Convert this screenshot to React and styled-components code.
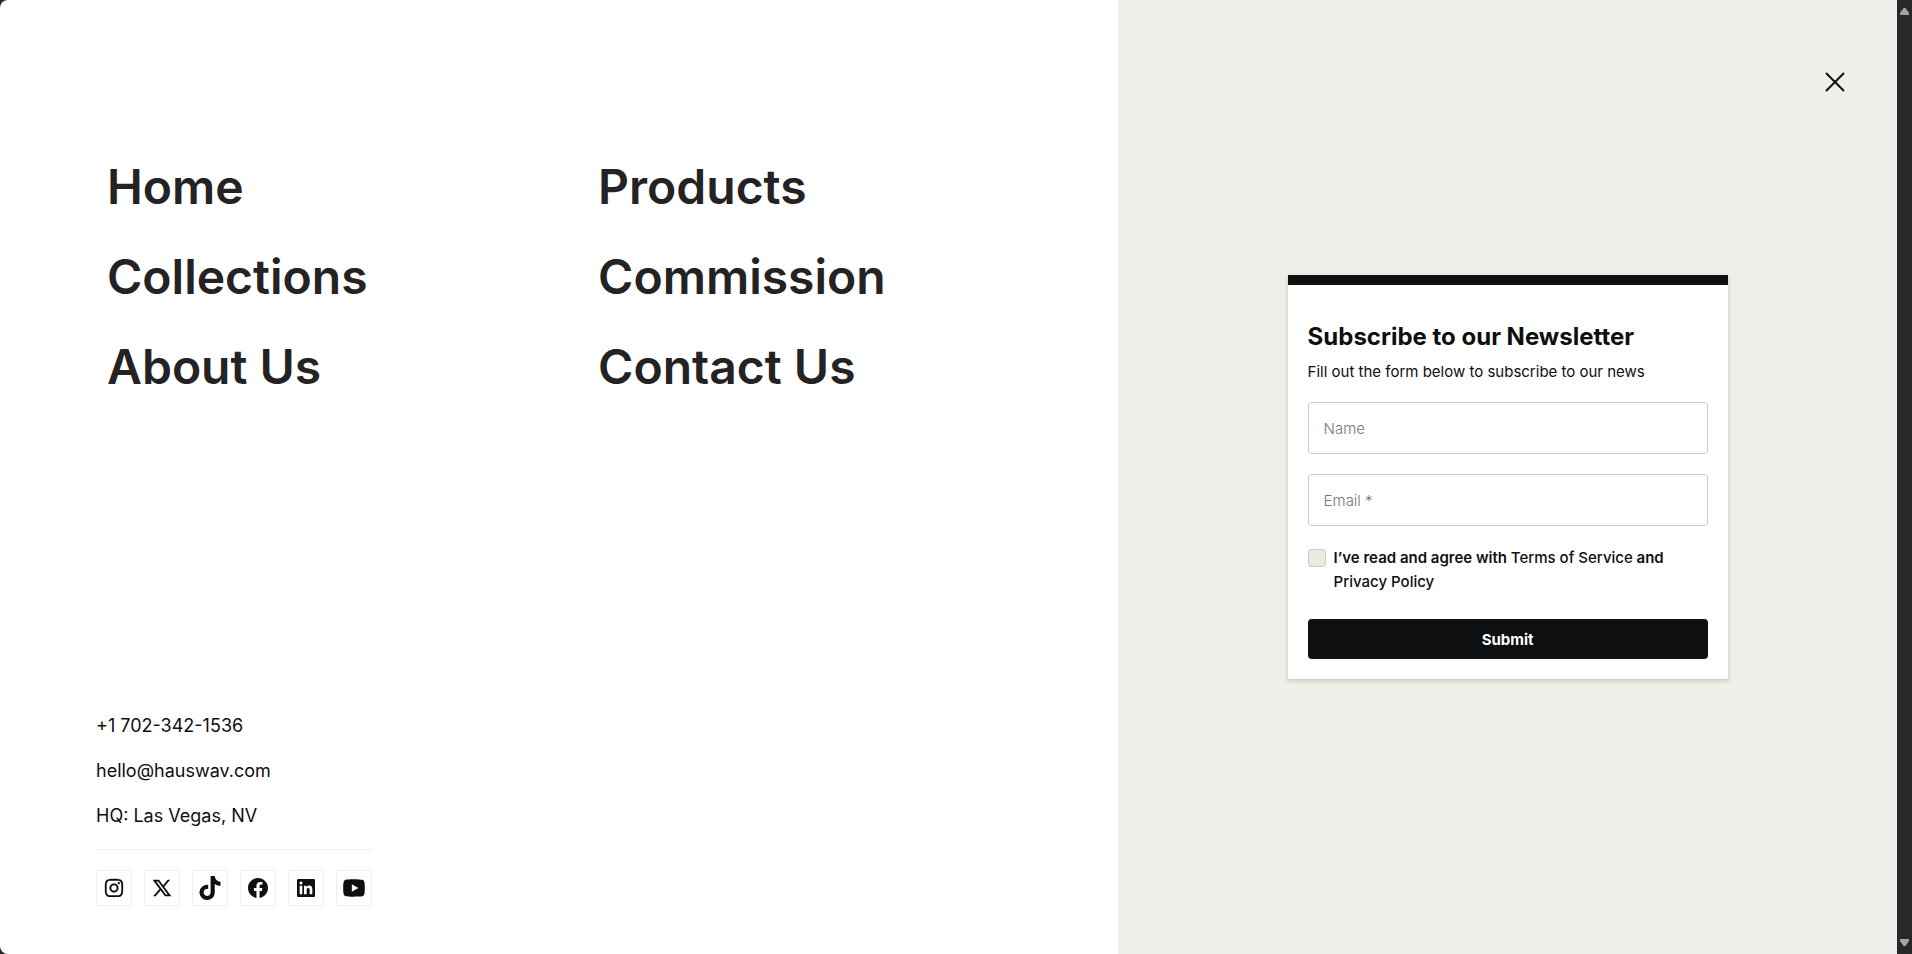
import { useState } from 'react';

import styled, { createGlobalStyle } from 'styled-components';
import {
  RiFacebookCircleFill,
  RiInstagramLine,
  RiLinkedinBoxFill,
  RiTwitterXLine,
  RiYoutubeFill,
} from 'react-icons/ri';
import { FaTiktok } from 'react-icons/fa6';

const GlobalStyle = createGlobalStyle`
  *, *::before, *::after {
    box-sizing: border-box;
  }

  body {
    margin: 0;
    background: #292728;
    color: #0e0f10;
    font-family: Inter, "Liberation Sans", sans-serif;
  }

  a {
    color: inherit;
    text-decoration: none;
  }

  h2, p, ul {
    margin: 0;
    padding: 0;
    list-style: none;
  }
`;

const StyledWindow = styled.div`
  display: flex;
  min-height: 100vh;
`;

const StyledMenu = styled.div`
  flex: 1;
  display: grid;
  grid-template-columns: 56fr 39fr;
  border-radius: 8px 0 0 8px;
  overflow: hidden;

  @media screen and (max-width: 992px) {
    grid-template-columns: 1fr;
  }
`;

const StyledLeft = styled.main`
  display: flex;
  flex-direction: column;
  justify-content: space-between;
  gap: 64px;
  padding: 158px 40px 48px 96px;
  background: #ffffff;
`;

const StyledNav = styled.nav`
  display: grid;
  grid-template-columns: 1fr 1fr;
  row-gap: 32px;
`;

const StyledNavLink = styled.a`
  padding-left: 11px;
  color: #242223;
  font-size: 48px;
  font-weight: 600;
  line-height: 58px;
`;

const StyledContact = styled.footer`
  align-self: flex-start;
`;

const StyledContactList = styled.ul`
  display: grid;
  row-gap: 18px;
  padding-bottom: 20px;
  border-bottom: 1px solid #efeeea;
  font-size: 18px;
  line-height: 27px;
`;

const StyledSocials = styled.ul`
  display: flex;
  gap: 12px;
  padding-top: 20px;
`;

const StyledSocialLink = styled.a`
  display: flex;
  align-items: center;
  justify-content: center;
  width: 36px;
  height: 36px;
  border: 1px solid #efeeea;
  font-size: ${({ $size }) => $size}px;
`;

const StyledRight = styled.aside`
  display: grid;
  grid-template-rows: 1fr auto 1fr;
  justify-items: center;
  background: #efeeea;
`;

const StyledClose = styled.button`
  align-self: start;
  justify-self: end;
  display: flex;
  margin: 60px 40px 0 0;
  padding: 12px;
  border: 0;
  background: none;
  color: #0e0f10;
  cursor: pointer;
`;

const StyledForm = styled.form`
  width: 100%;
  max-width: 440px;
  padding: 35px 20px 20px;
  border-top: 10px solid #0e0f10;
  background: #ffffff;
  box-shadow: 0 1px 1px #c4d2dc, 0 2px 3px 1px #e3d6bc;
`;

const StyledTitle = styled.h2`
  font-size: 24px;
  font-weight: 700;
  line-height: 34px;
`;

const StyledText = styled.p`
  margin-bottom: 13px;
  font-size: 15px;
  line-height: 35px;
`;

const StyledInput = styled.input`
  display: block;
  width: 100%;
  height: 52px;
  margin-bottom: 20px;
  padding: 0 15px;
  border: 1px solid #c0cfd8;
  border-radius: 4px;
  background: #ffffff;
  color: #0e0f10;
  font-family: inherit;
  font-size: 15px;
  font-weight: 300;

  &::placeholder {
    color: #757575;
    opacity: 1;
  }
`;

const StyledTerms = styled.div`
  display: flex;
  align-items: flex-start;
  gap: 8px;
  margin-bottom: 25px;
`;

const StyledCheckbox = styled.input`
  appearance: none;
  flex: none;
  width: 18px;
  height: 18px;
  margin: 3px 0 0;
  border: 1px solid #c0cfd8;
  border-radius: 3px;
  background: #efe9e0;

  &:checked {
    background: #0e0f10;
  }
`;

const StyledLabel = styled.label`
  font-size: 15px;
  font-weight: 600;
  line-height: 24px;

  a {
    font-weight: 500;
  }
`;

const StyledSubmit = styled.button`
  display: block;
  width: 100%;
  height: 40px;
  border: 0;
  border-radius: 4px;
  background: #0e0f10;
  color: #ffffff;
  font-family: inherit;
  font-size: 15px;
  font-weight: 700;
  cursor: pointer;
`;

const StyledScrollbar = styled.div`
  display: flex;
  flex-direction: column;
  align-items: center;
  justify-content: space-between;
  width: 15px;
  padding: 8px 0;
`;

const links = ['Home', 'Products', 'Collections', 'Commission', 'About Us', 'Contact Us'];

const socials = [
  { label: 'Instagram', Icon: RiInstagramLine, size: 22 },
  { label: 'X', Icon: RiTwitterXLine, size: 22 },
  { label: 'TikTok', Icon: FaTiktok, size: 24 },
  { label: 'Facebook', Icon: RiFacebookCircleFill, size: 24 },
  { label: 'LinkedIn', Icon: RiLinkedinBoxFill, size: 24 },
  { label: 'YouTube', Icon: RiYoutubeFill, size: 26 },
];

const Newsletter = () => {
  const [agreed, setAgreed] = useState(false);

  return (
    <StyledForm onSubmit={(e) => e.preventDefault()}>
      <StyledTitle>Subscribe to our Newsletter</StyledTitle>
      <StyledText>Fill out the form below to subscribe to our news</StyledText>
      <StyledInput type="text" placeholder="Name" aria-label="Name" />
      <StyledInput type="email" placeholder="Email *" aria-label="Email" required />
      <StyledTerms>
        <StyledCheckbox
          type="checkbox"
          id="terms"
          checked={agreed}
          onChange={(e) => setAgreed(e.target.checked)}
        />
        <StyledLabel htmlFor="terms">
          I’ve read and agree with <a href="#terms-of-service">Terms of Service</a> and{' '}
          <a href="#privacy">Privacy Policy</a>
        </StyledLabel>
      </StyledTerms>
      <StyledSubmit type="submit">Submit</StyledSubmit>
    </StyledForm>
  );
};

const App = () => (
  <>
    <GlobalStyle />
    <StyledWindow>
      <StyledMenu>
        <StyledLeft>
          <StyledNav>
            {links.map((link) => (
              <StyledNavLink key={link} href="#">{link}</StyledNavLink>
            ))}
          </StyledNav>

          <StyledContact>
            <StyledContactList>
              <li><a href="tel:+17023421536">+1 702-342-1536</a></li>
              <li><a href="mailto:hello@hauswav.com">hello@hauswav.com</a></li>
              <li>HQ: Las Vegas, NV</li>
            </StyledContactList>
            <StyledSocials>
              {socials.map(({ label, Icon, size }) => (
                <li key={label}>
                  <StyledSocialLink href="#" aria-label={label} $size={size}>
                    <Icon />
                  </StyledSocialLink>
                </li>
              ))}
            </StyledSocials>
          </StyledContact>
        </StyledLeft>

        <StyledRight>
          <StyledClose type="button" aria-label="Close menu">
            <svg width="20" height="20" viewBox="0 0 20 20" stroke="currentColor" strokeWidth="2">
              <path d="M1 1l18 18M19 1L1 19" />
            </svg>
          </StyledClose>
          <Newsletter />
        </StyledRight>
      </StyledMenu>

      <StyledScrollbar aria-hidden="true">
        <svg width="9" height="7" viewBox="0 0 9 7" fill="#a3a3a3">
          <path d="M3.5 0h2L9 5v2H0V5z" />
        </svg>
        <svg width="9" height="7" viewBox="0 0 9 7" fill="#a3a3a3">
          <path d="M3.5 7h2L9 2V0H0v2z" />
        </svg>
      </StyledScrollbar>
    </StyledWindow>
  </>
);

export default App;
